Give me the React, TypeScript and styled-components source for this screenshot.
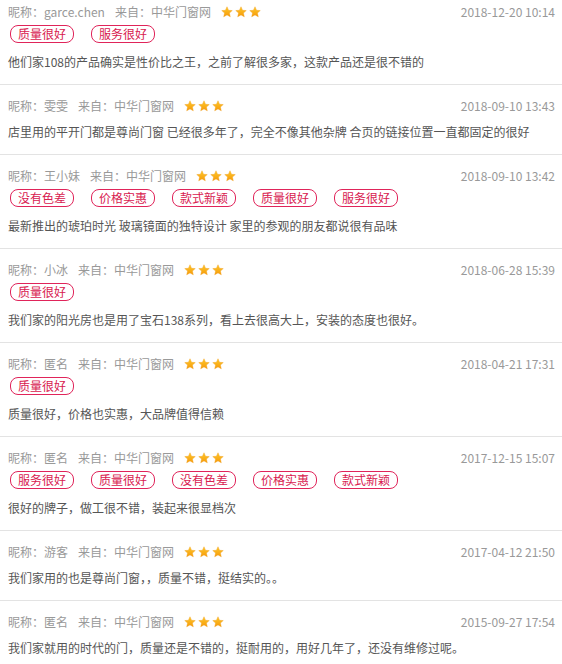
import styled, { createGlobalStyle } from "styled-components";

const GlobalStyle = createGlobalStyle`
  html, body {
    margin: 0;
    padding: 0;
    background: #fff;
    overflow: hidden;
  }
  body {
    font-family: "Noto Sans CJK SC", "Microsoft YaHei", sans-serif;
    font-size: 12px;
  }
`;

type Review = {
  name: string;
  date: string;
  tags: string[];
  text: string;
};

const reviews: Review[] = [
  {
    name: "garce.chen",
    date: "2018-12-20 10:14",
    tags: ["质量很好", "服务很好"],
    text: "他们家108的产品确实是性价比之王，之前了解很多家，这款产品还是很不错的",
  },
  {
    name: "雯雯",
    date: "2018-09-10 13:43",
    tags: [],
    text: "店里用的平开门都是尊尚门窗 已经很多年了，完全不像其他杂牌 合页的链接位置一直都固定的很好",
  },
  {
    name: "王小妹",
    date: "2018-09-10 13:42",
    tags: ["没有色差", "价格实惠", "款式新颖", "质量很好", "服务很好"],
    text: "最新推出的琥珀时光 玻璃镜面的独特设计 家里的参观的朋友都说很有品味",
  },
  {
    name: "小冰",
    date: "2018-06-28 15:39",
    tags: ["质量很好"],
    text: "我们家的阳光房也是用了宝石138系列，看上去很高大上，安装的态度也很好。",
  },
  {
    name: "匿名",
    date: "2018-04-21 17:31",
    tags: ["质量很好"],
    text: "质量很好，价格也实惠，大品牌值得信赖",
  },
  {
    name: "匿名",
    date: "2017-12-15 15:07",
    tags: ["服务很好", "质量很好", "没有色差", "价格实惠", "款式新颖"],
    text: "很好的牌子，做工很不错，装起来很显档次",
  },
  {
    name: "游客",
    date: "2017-04-12 21:50",
    tags: [],
    text: "我们家用的也是尊尚门窗，，质量不错，挺结实的。。",
  },
  {
    name: "匿名",
    date: "2015-09-27 17:54",
    tags: [],
    text: "我们家就用的时代的门，质量还是不错的，挺耐用的，用好几年了，还没有维修过呢。",
  },
];

function Star() {
  return (
    <svg width="12" height="12" viewBox="0 0 24 24">
      <defs>
        <linearGradient id="starFill" x1="0" y1="0" x2="0" y2="1">
          <stop offset="0" stopColor="#ffc928" />
          <stop offset="1" stopColor="#f59a0c" />
        </linearGradient>
      </defs>
      <path
        d="M12 1.5l3.1 7 7.4.7-5.6 5 1.7 7.4L12 17.8l-6.6 3.8 1.7-7.4-5.6-5 7.4-.7z"
        fill="url(#starFill)"
        stroke="#f0a020"
        strokeWidth="0.8"
        strokeLinejoin="round"
      />
    </svg>
  );
}

export default function App() {
  return (
    <>
      <GlobalStyle />
      <List>
        {reviews.map((r, i) => (
          <Entry key={i} $first={i === 0}>
            <Header>
              <Meta>
                <span>昵称：{r.name}</span>
                <span>来自：中华门窗网</span>
                <Stars>
                  <Star />
                  <Star />
                  <Star />
                </Stars>
              </Meta>
              <DateText>{r.date}</DateText>
            </Header>
            {r.tags.length > 0 && (
              <Tags>
                {r.tags.map((t) => (
                  <Tag key={t}>{t}</Tag>
                ))}
              </Tags>
            )}
            <Content>{r.text}</Content>
          </Entry>
        ))}
      </List>
    </>
  );
}

const List = styled.div`
  width: 562px;
`;

const Entry = styled.div<{ $first: boolean }>`
  padding: ${(p) => (p.$first ? "2px" : "11px")} 8px 12px;
  border-bottom: 1px solid #e3e3e3;
`;

const Header = styled.div`
  display: flex;
  align-items: center;
  justify-content: space-between;
  height: 20px;
  line-height: 20px;
  color: #999;
`;

const Meta = styled.div`
  display: flex;
  align-items: center;
  gap: 10px;
`;

const Stars = styled.div`
  display: flex;
  align-items: center;
  gap: 2px;
  margin-top: -1px;
`;

const DateText = styled.span`
  color: #999;
  margin-right: -1px;
`;

const Tags = styled.div`
  display: flex;
  gap: 17px;
  padding: 3px 0 3px 2px;
`;

const Tag = styled.span`
  display: inline-block;
  height: 16px;
  line-height: 16px;
  padding: 0 7px;
  border: 1px solid #e0245a;
  border-radius: 8px;
  color: #d8204f;
  white-space: nowrap;
`;

const Content = styled.div`
  margin-top: 6px;
  height: 20px;
  line-height: 20px;
  color: #555;
  white-space: nowrap;
`;
